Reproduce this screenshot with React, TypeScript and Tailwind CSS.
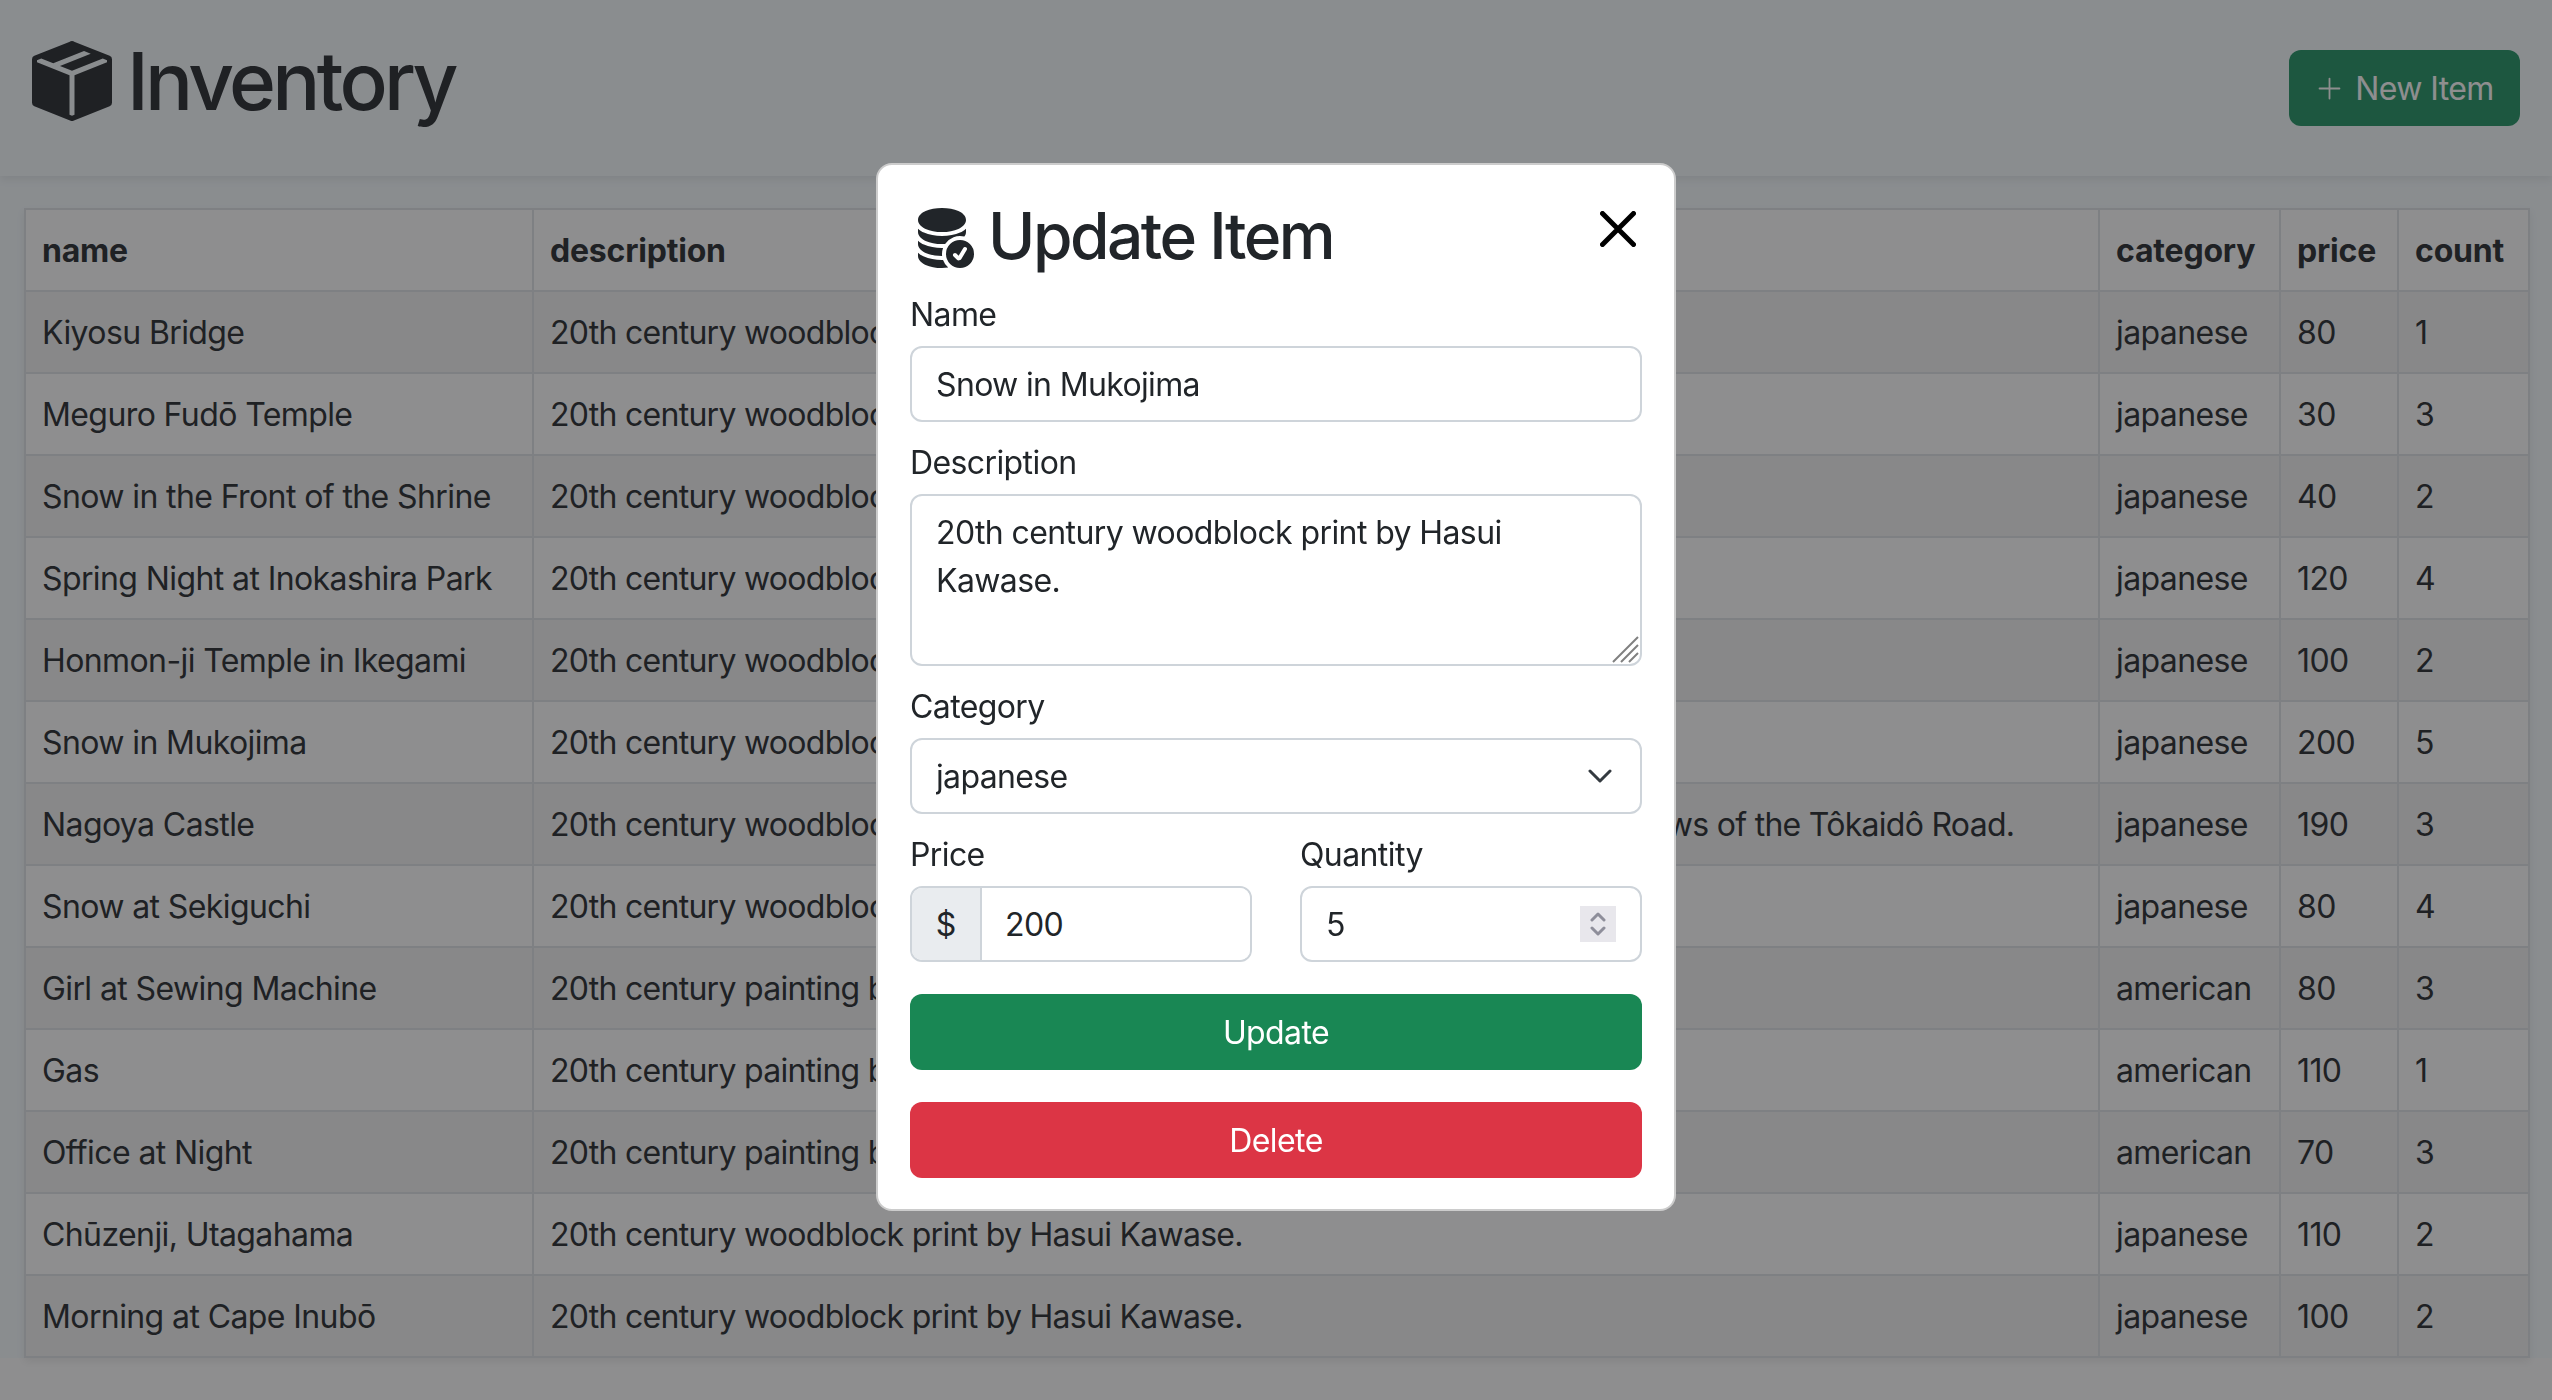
import { BsBoxSeamFill, BsDatabaseFillCheck, BsPlusLg } from "react-icons/bs";

const woodblock = "20th century woodblock print by Hasui Kawase.";
const painting = "20th century painting by Edward Hopper.";

const rows = [
  ["Kiyosu Bridge", woodblock, "japanese", "80", "1"],
  ["Meguro Fudō Temple", woodblock, "japanese", "30", "3"],
  ["Snow in the Front of the Shrine", woodblock, "japanese", "40", "2"],
  ["Spring Night at Inokashira Park", woodblock, "japanese", "120", "4"],
  ["Honmon-ji Temple in Ikegami", woodblock, "japanese", "100", "2"],
  ["Snow in Mukojima", woodblock, "japanese", "200", "5"],
  ["Nagoya Castle", "20th century woodblock print by Hasui Kawase. From the series – Twenty Views of the Tôkaidô Road.", "japanese", "190", "3"],
  ["Snow at Sekiguchi", woodblock, "japanese", "80", "4"],
  ["Girl at Sewing Machine", painting, "american", "80", "3"],
  ["Gas", painting, "american", "110", "1"],
  ["Office at Night", painting, "american", "70", "3"],
  ["Chūzenji, Utagahama", woodblock, "japanese", "110", "2"],
  ["Morning at Cape Inubō", woodblock, "japanese", "100", "2"],
];

const headers = ["name", "description", "category", "price", "count"];

const inputClass =
  "w-full h-[76px] rounded-xl border-2 border-[#ced4da] bg-white px-6 text-[32px] tracking-[-0.65px] text-[#212529] outline-none";

const Label = (props: { children: React.ReactNode }) => (
  <label className="block h-12 mb-2 pt-[1px] text-[32px] leading-[48px] tracking-[-0.6px] text-[#212529]">
    {props.children}
  </label>
);

const App: React.FC = () => {
  return (
    <div className="relative min-h-[1400px] bg-white font-['Inter',sans-serif] text-[#212529]">
      <div className="bg-[#f6fcff]">
        <header className="flex h-[176px] items-center justify-between px-8 shadow-[0_4px_8px_rgba(0,0,0,0.075)]">
          <h1 className="-mt-[14px] flex items-center gap-[15px] text-[80px] leading-[96px] font-medium tracking-[-3.7px]">
            <BsBoxSeamFill size={80} />
            Inventory
          </h1>
          <button className="flex h-[76px] w-[231px] items-center justify-center gap-[11px] rounded-xl bg-[#1c9060] text-[32px] tracking-[-0.6px] text-white">
            <BsPlusLg size={29} />
            <span className="pt-[2px]">New Item</span>
          </button>
        </header>
        <div className="px-6 pt-8">
          <table className="w-full table-fixed border-collapse bg-white text-[32px] leading-[48px] tracking-[-0.6px] shadow-[0_4px_8px_rgba(0,0,0,0.075)]">
            <colgroup>
              <col className="w-[508px]" />
              <col className="w-[1566px]" />
              <col className="w-[181px]" />
              <col className="w-[118px]" />
              <col className="w-[131px]" />
            </colgroup>
            <thead>
              <tr className="h-[82px]">
                {headers.map((h) => (
                  <th key={h} className="border-2 border-[#dee2e6] px-4 pt-[1px] pb-0 text-left font-bold tracking-[-0.2px]">
                    {h}
                  </th>
                ))}
              </tr>
            </thead>
            <tbody>
              {rows.map((row, i) => (
                <tr key={row[0]} className={i % 2 === 0 ? "h-[82px] bg-[#f2f2f2]" : "h-[82px] bg-white"}>
                  {row.map((cell, j) => (
                    <td
                      key={j}
                      className={
                        j === 1
                          ? "border-2 border-[#dee2e6] px-4 pt-[1px] pb-0 whitespace-nowrap overflow-hidden tracking-[-0.72px]"
                          : "border-2 border-[#dee2e6] px-4 pt-[1px] pb-0 whitespace-nowrap overflow-hidden"
                      }
                    >
                      {cell}
                    </td>
                  ))}
                </tr>
              ))}
            </tbody>
          </table>
        </div>
      </div>

      <div className="fixed inset-0 flex justify-center bg-[#1d1d1f]/50 pt-[163px]">
        <div className="h-[1048px] w-[800px] rounded-2xl border-2 border-black/20 bg-white px-8 pt-[33px] pb-8">
          <div className="flex h-[92px] items-start justify-between">
            <h2 className="flex items-center gap-[14px] text-[64px] leading-[76px] font-medium tracking-[-2.5px]">
              <BsDatabaseFillCheck size={64} />
              Update Item
            </h2>
            <svg width="36" height="36" viewBox="0 0 36 36" className="mt-[13px] mr-[6px]" fill="none" stroke="#000" strokeWidth="5" strokeLinecap="round">
              <path d="M2.5 2.5 33.5 33.5M33.5 2.5 2.5 33.5" />
            </svg>
          </div>
          <form className="flex flex-col gap-4">
            <div>
              <Label>Name</Label>
              <input className={inputClass} defaultValue="Snow in Mukojima" />
            </div>
            <div>
              <Label>Description</Label>
              <div className="relative">
                <textarea
                  rows={3}
                  className="block h-[172px] w-full resize-none rounded-xl border-2 border-[#ced4da] bg-white px-6 pt-[13px] pb-3 text-[32px] leading-[48px] tracking-[-0.6px] text-[#212529] outline-none"
                  defaultValue="20th century woodblock print by Hasui Kawase."
                />
                <svg width="28" height="28" viewBox="0 0 28 28" className="absolute right-[2px] bottom-[2px]" fill="none" stroke="#808080" strokeWidth="2">
                  <path d="M1 26 26 1M9 26 26 9M17 26 26 17" />
                </svg>
              </div>
            </div>
            <div>
              <Label>Category</Label>
              <div className="relative">
                <select className={inputClass + " appearance-none pt-[2px]"} defaultValue="japanese">
                  <option>japanese</option>
                  <option>american</option>
                </select>
                <svg width="24" height="14" viewBox="0 0 24 14" className="absolute right-[30px] top-[31px]" fill="none" stroke="#343a40" strokeWidth="3" strokeLinecap="round" strokeLinejoin="round">
                  <path d="M2 2 12 12 22 2" />
                </svg>
              </div>
            </div>
            <div className="grid grid-cols-2 gap-12">
              <div>
                <Label>Price</Label>
                <div className="flex h-[76px] rounded-xl border-2 border-[#ced4da] overflow-hidden">
                  <span className="flex w-[70px] items-center justify-center border-r-2 border-[#ced4da] bg-[#e9ecef] pt-[2px] text-[32px]">$</span>
                  <input className="min-w-0 flex-1 bg-white pl-[23px] pt-[2px] text-[32px] tracking-[-0.6px] outline-none" defaultValue="200" />
                </div>
              </div>
              <div>
                <Label>Quantity</Label>
                <div className="relative">
                  <input className={inputClass} defaultValue="5" />
                  <div className="absolute right-[26px] top-5 flex h-9 w-9 items-center justify-center bg-[#e8e7ec]">
                    <svg width="16" height="28" viewBox="0 0 16 28" fill="none" stroke="#8e8e9a" strokeWidth="3" strokeLinecap="round" strokeLinejoin="round">
                      <path d="M2 10 8 4 14 10M2 18 8 24 14 18" />
                    </svg>
                  </div>
                </div>
              </div>
            </div>
            <button type="button" className="mt-4 h-[76px] rounded-xl bg-[#198754] pt-[2px] text-[32px] tracking-[-0.6px] text-white">
              Update
            </button>
            <button type="button" className="mt-4 h-[76px] rounded-xl bg-[#dc3545] pt-[2px] text-[32px] tracking-[-0.6px] text-white">
              Delete
            </button>
          </form>
        </div>
      </div>
    </div>
  );
};

export default App;
